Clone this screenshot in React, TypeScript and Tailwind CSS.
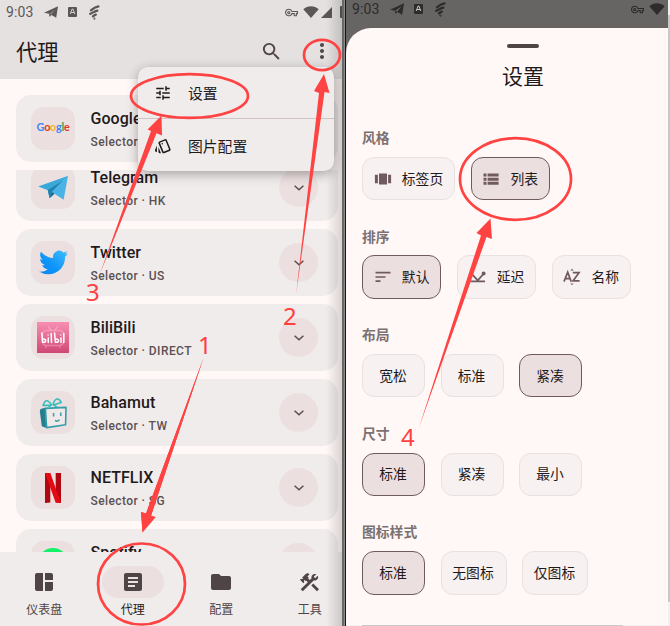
import React from "react";
import {
  MdArticle,
  MdConstruction,
  MdFolder,
  MdMoreVert,
  MdOutlineStyle,
  MdOutlineVpnKey,
  MdSearch,
  MdSpaceDashboard,
  MdTune,
} from "react-icons/md";

function StatusLeft({ className }: { className: string }) {
  return (
    <div className={`flex items-center ${className}`}>
      <span className="w-[38px] font-[Roboto] text-[14px] leading-4 tracking-[0.1px]">9:03</span>
      <svg width="15" height="12" viewBox="0 0 15 12" fill="currentColor">
        <path d="M0 6.8 14 .3 12.2 11.8 7.4 9 5.6 11 5 7.8Z" />
        <path d="M5.4 7.8 11.6 3.2 7 8.6Z" fill="#e6e1e1" opacity=".4" />
      </svg>
      <svg className="ml-[9px]" width="9" height="10" viewBox="0 0 9 10">
        <rect width="9" height="10" rx="1" fill="currentColor" />
        <path d="M2.2 7 4.1 2h.8L6.8 7M3 5.5h3" fill="none" stroke="#e6e1e1" strokeOpacity=".85" />
      </svg>
      <svg className="ml-[12px]" width="11" height="15" viewBox="0 0 11 15" fill="none" stroke="currentColor" strokeLinecap="round">
        <path d="M2 5.4C4 4 5 2.4 9.4 1.4M1.2 8.9C3.5 8 5 6.4 8.3 5.6M4 11.3 6.8 9.6" strokeWidth="2.3" />
        <circle cx="5.4" cy="13.6" r=".4" strokeWidth="1.4" />
      </svg>
    </div>
  );
}

function Wifi() {
  return (
    <svg width="16" height="12" viewBox="0 0 16 12" fill="currentColor">
      <path d="M.3 3.2C4.5-.7 11.5-.7 15.7 3.2L8 12Z" />
    </svg>
  );
}

function CarouselIcon() {
  return (
    <svg width="20" height="20" viewBox="0 0 20 20" fill="currentColor">
      <path d="M6 4.5h8v11H6ZM1.9 5.8h3v8.4h-3ZM15.1 5.8h3v8.4h-3Z" />
    </svg>
  );
}

function ListIcon() {
  return (
    <svg width="20" height="20" viewBox="0 0 20 20" fill="currentColor">
      <path d="M2.5 4.6h3v3h-3ZM6.6 4.6h11v3h-11ZM2.5 8.7h3v3h-3ZM6.6 8.7h11v3h-11ZM2.5 12.8h3v3h-3ZM6.6 12.8h11v3h-11Z" />
    </svg>
  );
}

function SortIcon() {
  return (
    <svg width="20" height="20" viewBox="0 0 20 20" fill="none" stroke="currentColor" strokeWidth="1.7">
      <path d="M2.5 5.7h15M2.5 10h10M2.5 14.2h5" />
    </svg>
  );
}

function PingIcon() {
  return (
    <svg width="20" height="20" viewBox="0 0 20 20" fill="none" stroke="currentColor" strokeWidth="1.8">
      <path d="M2.5 14.4h14.5M3.2 6.3l6.6 7 5.6-6.3" />
      <circle cx="15.6" cy="6.6" r="1.1" fill="currentColor" />
    </svg>
  );
}

function AlphaIcon() {
  return (
    <svg width="20" height="20" viewBox="0 0 20 20" fill="none" stroke="currentColor" strokeWidth="1.7">
      <path d="M2 14.6 5.7 5.2 9.2 14.6M3.3 11.6h4.8M10.8 5.7h6.2L11 13.9h6.6" />
      <path d="M8.3 3.4h3.4L10 1.7ZM8.3 16.4h3.4L10 18.1Z" fill="currentColor" stroke="none" />
    </svg>
  );
}

function GoogleLogo() {
  return (
    <div className="-mt-[2px] font-[Lato] text-[10.8px] font-bold leading-none tracking-[-0.25px]">
      <span className="text-[#4285f4]">G</span>
      <span className="text-[#e0352b]">o</span>
      <span className="text-[#f3b51b]">o</span>
      <span className="text-[#4285f4]">g</span>
      <span className="text-[#34a853]">l</span>
      <span className="text-[#e0352b]">e</span>
    </div>
  );
}

function TelegramLogo() {
  return (
    <svg width="32" height="32" viewBox="0 0 32 32">
      <path d="M1.5 14.5 31 4 26.6 27.8 17.5 21.8 12.6 26.2 10.7 18Z" fill="#49b3e5" />
      <path d="M1.5 14.5 31 4 10.7 18Z" fill="#39a9dc" />
      <path d="M10.7 18 26 8.2 14.6 20 12.6 26.2Z" fill="#2582ae" />
      <path d="M14.6 20 17.5 21.8 12.6 26.2Z" fill="#1d6c93" />
    </svg>
  );
}

function TwitterLogo() {
  return (
    <svg width="29" height="25" viewBox="0 2 24 20">
      <defs>
        <linearGradient id="bird" x1="1" y1="0" x2="0" y2="1">
          <stop stopColor="#42bdfd" />
          <stop offset=".6" stopColor="#0d93fa" />
          <stop offset="1" stopColor="#0788f5" />
        </linearGradient>
      </defs>
      <path fill="url(#bird)" d="M23.95 4.57a10 10 0 0 1-2.82.77 4.96 4.96 0 0 0 2.16-2.72c-.95.56-2 .96-3.13 1.18a4.92 4.92 0 0 0-8.38 4.48C7.69 8.1 4.07 6.13 1.64 3.16a4.92 4.92 0 0 0 1.52 6.57 4.9 4.9 0 0 1-2.23-.61v.06c0 2.39 1.7 4.38 3.95 4.83a5 5 0 0 1-2.21.08 4.94 4.94 0 0 0 4.6 3.42A9.87 9.87 0 0 1 0 19.54 14 14 0 0 0 7.55 21.75c9.05 0 14-7.5 14-13.98 0-.21 0-.42-.02-.63a9.94 9.94 0 0 0 2.42-2.57Z" />
    </svg>
  );
}

function BilibiliLogo() {
  return (
    <div className="flex h-[31px] w-8 items-center justify-center bg-linear-to-b from-[#f78fb3] to-[#cf4775]">
      <svg width="32" height="31" viewBox="0 0 32 31" fill="none" strokeLinecap="round">
        <rect x="5.5" y="8.5" width="21" height="15" rx="4" stroke="#ffc4d7" strokeOpacity=".4" strokeWidth="1.6" />
        <path d="M11.5 5 14 8M20.5 5 18 8M9 25v.5M23 25v.5" stroke="#ffc4d7" strokeOpacity=".45" strokeWidth="1.4" />
        <path d="M4.8 11 5.6 20.3c4.2.6 4.2-3.6.4-3.2M11.3 16v4.5M14.2 11.5l.3 9M17.6 11l.8 9.3c4.2.6 4.2-3.6.4-3.2M24 16v4.5M26.8 11.5v9" stroke="white" strokeWidth="1.5" />
        <path d="M11.1 12.9v.1M23.8 12.9v.1" stroke="white" strokeWidth="1.3" />
      </svg>
    </div>
  );
}

function BahamutLogo() {
  return (
    <svg width="30" height="32" viewBox="0 0 30 32" fill="none" strokeLinejoin="round">
      <path d="M2.5 12 7 10.8 8.4 31 3.8 29.2 1.8 14Z" fill="#267f8c" />
      <path d="M7.4 11.4 28 10.4 27.6 27.8 8.6 30.6Z" stroke="#359daa" strokeWidth="1.6" fill="#efe9e9" />
      <path d="M13.6 8C10 2.2 7.2 2.2 5 8.4l8.2-.2L10.5 10.5M15 7.8C16.8.6 21 .4 23.2 5.6l-7.8 2.5 4 2" stroke="#36bdbd" strokeWidth="1.6" />
      <path d="M15.6 16v3.6M22.8 15.5v3.6M17.2 23.2c1 1.4 3.2 1.2 4.2-.5" stroke="#389da9" strokeWidth="1.5" />
    </svg>
  );
}

function NetflixLogo() {
  return (
    <svg width="18" height="30" viewBox="0 0 18 30">
      <path d="M1 0h5.3v29.4L1 30ZM11.7 0H17v30l-5.3-.6Z" fill="#b20710" />
      <path d="M1 0h5.3L17 30l-5.4-.6Z" fill="#e50914" />
    </svg>
  );
}

function SpotifyLogo() {
  return <div className="h-[30px] w-[30px] rounded-full bg-[#12f267]" />;
}

function ProxyCard({ name, via, logo }: { name: string; via: string; logo: React.ReactNode }) {
  return (
    <div className="flex h-[67px] shrink-0 items-center rounded-[15px] bg-[#f1ecec] pl-[15px] pr-5 font-[Roboto]">
      <div className="flex h-[43px] w-11 items-center justify-center rounded-[13px] bg-[#ecdfdf]">{logo}</div>
      <div className="ml-[15.5px] grow pt-[2px]">
        <div className="text-[16px] font-medium leading-[22px] tracking-[0.05px] text-[#1f1a1b]">{name}</div>
        <div className="mt-[3px] text-[12px] font-medium leading-[18px] tracking-[0.42px] text-[#5b5152]">Selector · {via}</div>
      </div>
      <div className="flex h-[39px] w-[39px] items-center justify-center rounded-full bg-[#ecdfdf] text-[#5e4d50]">
        <svg width="10" height="6" viewBox="0 0 10 6" fill="none" stroke="currentColor" strokeWidth="1.5">
          <path d="M.6.7 5 4.8 9.4.7" />
        </svg>
      </div>
    </div>
  );
}

function NavItem({ label, icon, active }: { label: string; icon: React.ReactNode; active?: boolean }) {
  return (
    <div className="flex w-[88.5px] shrink-0 flex-col items-center text-[#4f4446]">
      <div className={`flex h-8 w-[62px] items-center justify-center rounded-full ${active ? "bg-[#ecdfdf]" : ""}`}>{icon}</div>
      <div className={`mt-[2px] text-[12px] leading-[18px] ${active ? "text-[#1f1a1b]" : ""}`}>{label}</div>
    </div>
  );
}

function ProxyPhone() {
  return (
    <div className="relative flex h-full w-[342px] shrink-0 flex-col overflow-hidden bg-[#fff8f6]">
      <header className="h-[79px] shrink-0 bg-[#e6e1e1]">
        <div className="flex h-6 justify-between pl-[6px] text-[#5b5757]">
          <StatusLeft className="" />
          <div className="flex w-[57px] shrink-0 items-center overflow-hidden">
            <MdOutlineVpnKey className="shrink-0" size={13} />
            <span className="ml-[5px] shrink-0"><Wifi /></span>
            <svg className="ml-[2px] shrink-0" width="11" height="11" viewBox="0 0 11 11" fill="currentColor"><path d="M11 0v11H0Z" /></svg>
            <span className="ml-[8px] h-3 w-3 shrink-0 rounded-[1px] bg-current" />
          </div>
        </div>
        <div className="flex h-[54px] items-center pl-4 text-[#4f4446]">
          <h1 className="grow text-[21.3px] leading-none text-[#1f1a1b]">代理</h1>
          <MdSearch size={23} />
          <MdMoreVert className="ml-[27px] mr-[8px]" size={24} />
        </div>
      </header>
      <div className="h-[91px] shrink-0 pl-4 pr-1 pt-4">
        <ProxyCard name="Google" via="HK" logo={<GoogleLogo />} />
      </div>
      <div className="flex h-[382px] shrink-0 flex-col overflow-hidden pl-4 pr-1">
        <div className="-mt-[16px] flex flex-col gap-2">
          <ProxyCard name="Telegram" via="HK" logo={<TelegramLogo />} />
          <ProxyCard name="Twitter" via="US" logo={<TwitterLogo />} />
          <ProxyCard name="BiliBili" via="DIRECT" logo={<BilibiliLogo />} />
          <ProxyCard name="Bahamut" via="TW" logo={<BahamutLogo />} />
          <ProxyCard name="NETFLIX" via="SG" logo={<NetflixLogo />} />
          <ProxyCard name="Spotify" via="SG" logo={<SpotifyLogo />} />
        </div>
      </div>
      <nav className="flex grow bg-[#f1ecec] pt-[14px]">
        <NavItem label="仪表盘" icon={<MdSpaceDashboard size={24} />} />
        <NavItem label="代理" active icon={<MdArticle size={24} />} />
        <NavItem label="配置" icon={<MdFolder size={24} />} />
        <NavItem label="工具" icon={<MdConstruction size={23} />} />
      </nav>
      <div className="absolute inset-y-0 right-0 w-[16px] bg-linear-to-r from-transparent to-black/15" />
      <div className="absolute left-[138px] top-[67px] h-[104px] w-[196px] overflow-hidden rounded-[10px] bg-[#f1ecec] text-[14.8px] text-[#1f1a1b] shadow-[0_3px_12px_rgba(0,0,0,0.32)]">
        <div className="flex h-[52px] items-center border-b border-[#cfc3c4] pl-[16px] pt-px">
          <MdTune size={18} />
          <span className="ml-[16px] mt-px">设置</span>
        </div>
        <div className="flex h-[52px] items-center pl-[16px] pt-px">
          <MdOutlineStyle size={18} />
          <span className="ml-[16px] mt-px">图片配置</span>
        </div>
      </div>
    </div>
  );
}

function Chip({ label, icon, active, width }: { label: string; icon?: React.ReactNode; active?: boolean; width: string }) {
  return (
    <div
      className={`flex h-[43.5px] items-center justify-center rounded-[12px] border pr-px text-[13.8px] text-[#1f1a1b] ${width} ${
        active ? "border-[#6f5b5e] bg-[#ecdfdf]" : "border-[#e8e1e1] bg-[#f7f1f1]"
      }`}
    >
      {icon && <span className="mr-[9px] text-[#705a5e]">{icon}</span>}
      <span className="-mt-px">{label}</span>
    </div>
  );
}

function Section({ title, children }: { title: string; children: React.ReactNode }) {
  return (
    <section className="h-[98.6px]">
      <h3 className="text-[13.8px] font-bold leading-5 text-[#7b7172]">{title}</h3>
      <div className="mt-[9.8px] flex gap-[15.5px]">{children}</div>
    </section>
  );
}

function SettingsPhone() {
  return (
    <div className="flex h-full w-[322px] shrink-0 flex-col bg-[#676563]">
      <div className="flex h-[28px] shrink-0 justify-between pl-[6px] pr-[3px] text-[#2d2b2b]">
        <StatusLeft className="h-[18px]" />
        <div className="flex h-[18px] items-center gap-[5px]">
          <MdOutlineVpnKey size={13} />
          <Wifi />
        </div>
      </div>
      <div className="flex min-h-0 grow flex-col rounded-tl-[25px] bg-[#fff8f6]">
        <div className="flex flex-col pt-4">
          <div className="ml-[161px] h-1 w-8 rounded-full bg-[#4f4446]" />
          <h2 className="ml-[156px] mt-[13px] text-[21px] leading-7 text-[#1f1a1b]">设置</h2>
        </div>
        <div className="mt-[38px] h-[488px] overflow-hidden pl-4">
          <Section title="风格">
            <Chip width="w-[93px]" label="标签页" icon={<CarouselIcon />} />
            <Chip width="w-[79.5px]" active label="列表" icon={<ListIcon />} />
          </Section>
          <Section title="排序">
            <Chip width="w-[79.3px]" active label="默认" icon={<SortIcon />} />
            <Chip width="w-[79.3px]" label="延迟" icon={<PingIcon />} />
            <Chip width="w-[79.3px]" label="名称" icon={<AlphaIcon />} />
          </Section>
          <Section title="布局">
            <Chip width="w-[63px]" label="宽松" />
            <Chip width="w-[63px]" label="标准" />
            <Chip width="w-[63px]" active label="紧凑" />
          </Section>
          <Section title="尺寸">
            <Chip width="w-[63px]" active label="标准" />
            <Chip width="w-[63px]" label="紧凑" />
            <Chip width="w-[63px]" label="最小" />
          </Section>
          <Section title="图标样式">
            <Chip width="w-[63px]" active label="标准" />
            <Chip width="w-[66px]" label="无图标" />
            <Chip width="w-[66px]" label="仅图标" />
          </Section>
        </div>
      </div>
      <div className="flex h-[1px] bg-[#f2f1f1] pl-4">
        <div className="w-[261px] bg-[#c9c9c9]" />
      </div>
    </div>
  );
}

function Annotations() {
  return (
    <div className="pointer-events-none absolute inset-0 font-['Noto_Sans'] text-[24px] leading-none text-[#ff4040]">
      <svg className="absolute inset-0" width="670" height="626" fill="none">
        <g stroke="#ff4242" strokeWidth="2.7">
          <ellipse cx="189.5" cy="96" rx="58.5" ry="21.8" />
          <ellipse cx="322" cy="55" rx="18" ry="15.2" />
          <ellipse cx="515.5" cy="179" rx="55.5" ry="40.8" />
          <ellipse cx="141.5" cy="584" rx="43.5" ry="40.5" />
        </g>
        <g fill="#ff4242">
          <path d="M99.5 275 151 131 147.5 129.5 161.5 115.5 162 135.5 156.5 133.2Z" />
          <path d="M296 295 319 93 314 91 324 74 329.5 93 324.5 92Z" />
          <path d="M203.5 358 151 516 142.5 532.5 141 512 146 513.5Z" />
          <path d="M203.5 358 146 513.5 141 512 142.5 532.5 155.8 517 151 515.5Z" />
          <path d="M418.5 429 481 235.5 476.5 233 490.5 218.5 492 239 486.5 237Z" />
        </g>
      </svg>
      <span className="absolute left-[198px] top-[333px]">1</span>
      <span className="absolute left-[283px] top-[304px]">2</span>
      <span className="absolute left-[86px] top-[280px]">3</span>
      <span className="absolute left-[401px] top-[425px]">4</span>
    </div>
  );
}

export default function App() {
  return (
    <div className="relative flex h-[626px] w-[670px] overflow-hidden bg-white font-['Noto_Sans_CJK_SC',sans-serif]">
      <ProxyPhone />
      <div className="h-full w-1 shrink-0 border-l-2 border-r border-l-[#686868] border-r-[#11151c] bg-[#8c8c8c]" />
      <SettingsPhone />
      <div className="flex w-[2px] flex-col bg-[#f0f0f0] pt-[15px]">
        <div className="h-[587px] bg-[#c8c8c8]" />
      </div>
      <Annotations />
    </div>
  );
}
